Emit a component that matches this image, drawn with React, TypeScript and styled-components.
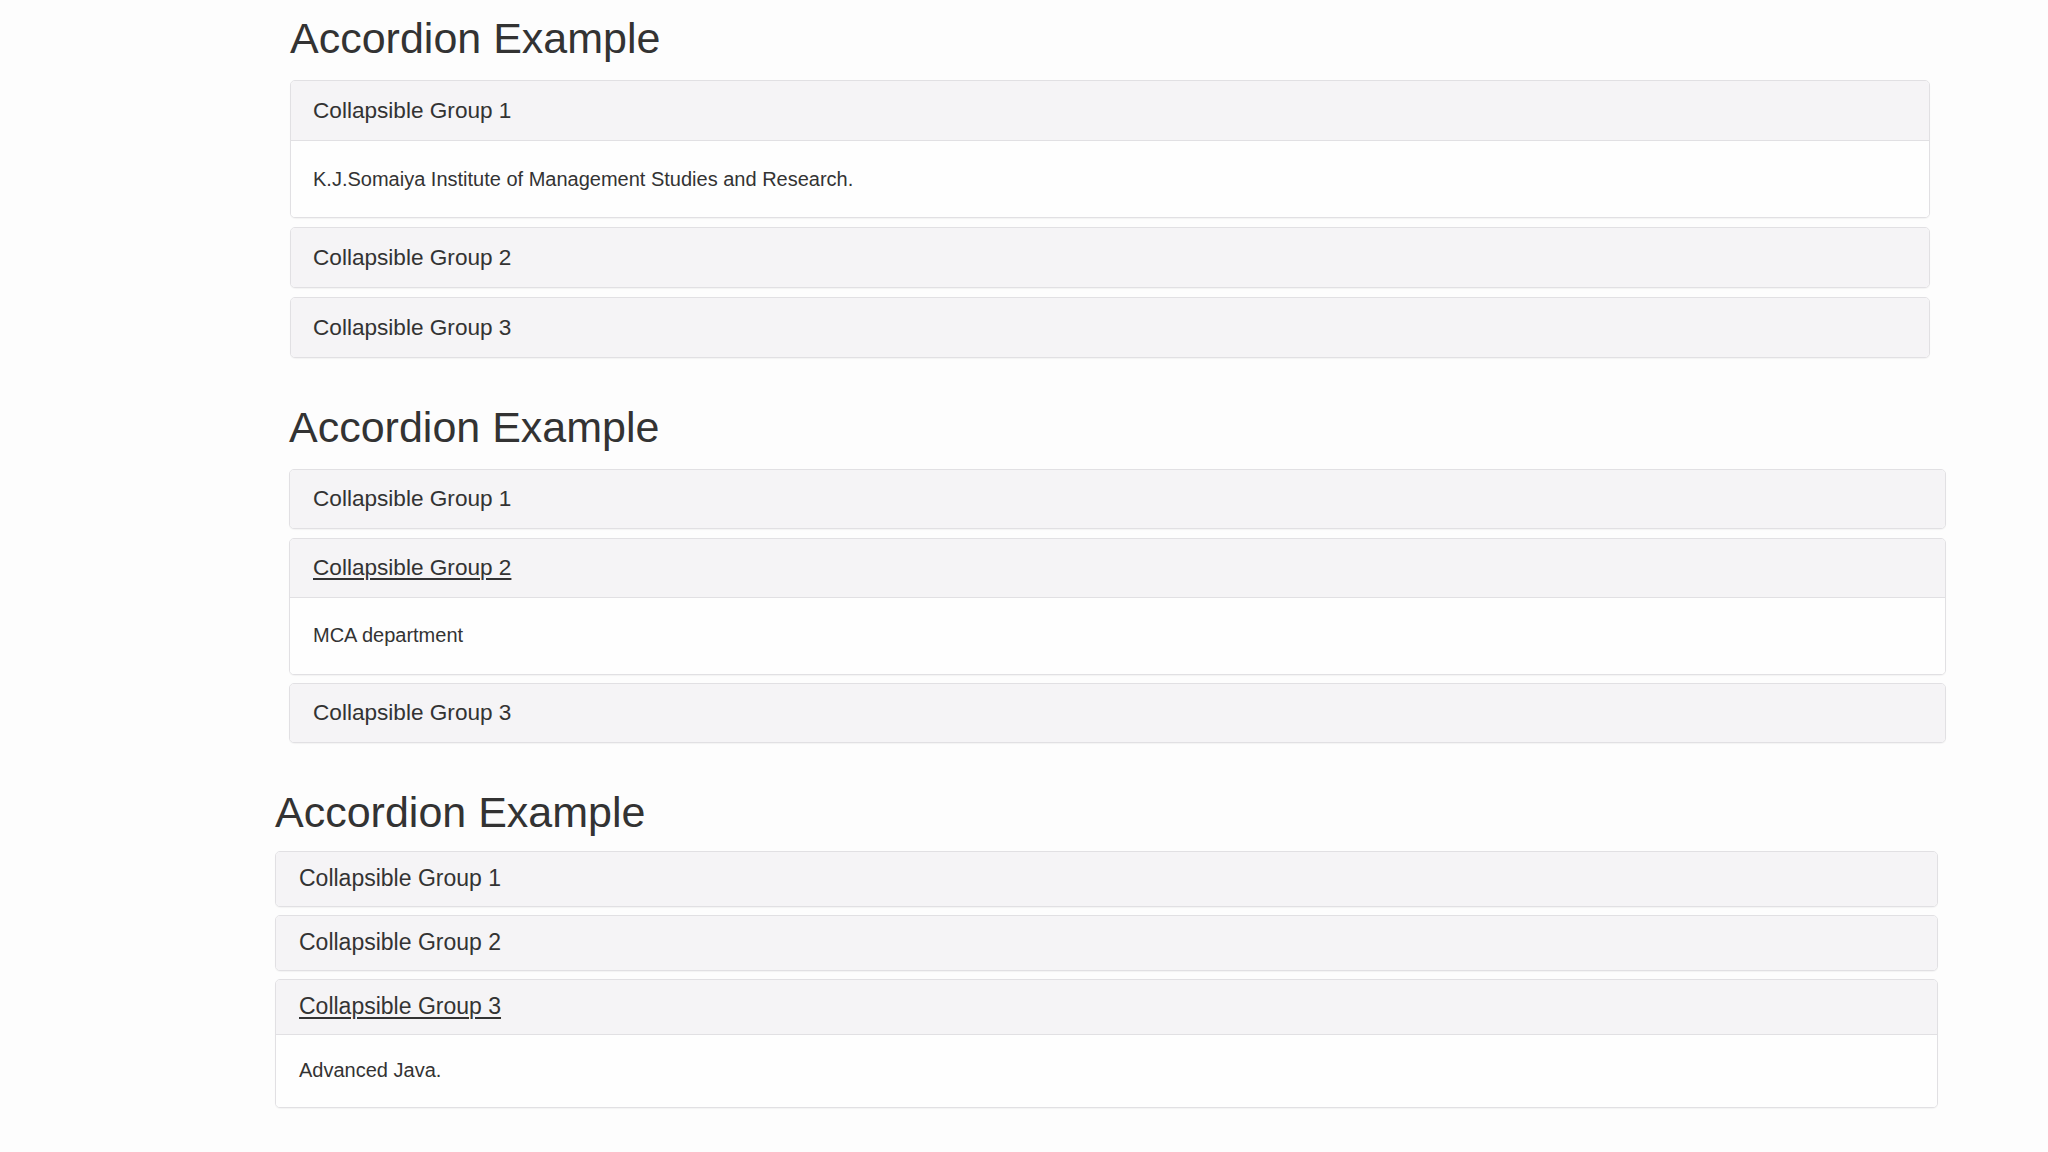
import React from "react";
import styled, { createGlobalStyle } from "styled-components";

const GlobalStyle = createGlobalStyle`
  html, body {
    margin: 0;
    padding: 0;
    background: #fdfdfd;
  }
  body {
    font-family: "Liberation Sans", Arial, Helvetica, sans-serif;
    color: #333;
  }
`;

const Page = styled.main`
  display: flex;
  flex-direction: column;
  align-items: flex-start;
  min-height: 1152px;
  padding-top: 14px;
  box-sizing: border-box;
  background: #fdfdfd;
`;

const Section = styled.section<{ $left: number; $width: number; $top: number }>`
  display: flex;
  flex-direction: column;
  margin-left: ${(p) => p.$left}px;
  margin-top: ${(p) => p.$top}px;
  width: ${(p) => p.$width}px;
`;

const Title = styled.h2<{ $gap: number }>`
  margin: 0 0 ${(p) => p.$gap}px 0;
  font-family: "Liberation Sans", Arial, Helvetica, sans-serif;
  font-weight: 400;
  font-size: 43px;
  line-height: 48px;
  color: #333;
`;

const PanelGroup = styled.div<{ $gap: number }>`
  display: flex;
  flex-direction: column;
  gap: ${(p) => p.$gap}px;
`;

const Panel = styled.div`
  display: flex;
  flex-direction: column;
  border: 1px solid #e1e0e3;
  border-radius: 5px;
  background: #fefefe;
  box-shadow: 0 1px 1px rgba(0, 0, 0, 0.04);
  overflow: hidden;
`;

const Heading = styled.div<{ $height: number; $pad: number }>`
  display: flex;
  align-items: center;
  height: ${(p) => p.$height}px;
  padding: 0 ${(p) => p.$pad}px;
  box-sizing: border-box;
  background: #f5f4f6;
`;

const HeadingLink = styled.a<{ $size: number; $active: boolean }>`
  font-size: ${(p) => p.$size}px;
  line-height: 1.15;
  color: #333;
  text-decoration: ${(p) => (p.$active ? "underline" : "none")};
  text-decoration-thickness: 1.5px;
  text-underline-offset: 3px;
  cursor: pointer;
`;

const Body = styled.div<{ $height: number; $pad: number }>`
  display: flex;
  align-items: center;
  height: ${(p) => p.$height}px;
  padding: 0 ${(p) => p.$pad}px;
  box-sizing: border-box;
  border-top: 1px solid #e1e0e3;
  background: #fefefe;
  font-size: 20px;
  line-height: 1.15;
  color: #333;
`;

type AccordionData = {
  left: number;
  width: number;
  top: number;
  titleGap: number;
  groupGap: number;
  headHeight: number;
  bodyHeight: number;
  pad: number;
  headSize: number;
  open: number;
  text: string;
};

const accordions: AccordionData[] = [
  {
    left: 290,
    width: 1640,
    top: 0,
    titleGap: 18,
    groupGap: 9,
    headHeight: 59,
    bodyHeight: 77,
    pad: 22,
    headSize: 22.6,
    open: 0,
    text: "K.J.Somaiya Institute of Management Studies and Research.",
  },
  {
    left: 289,
    width: 1657,
    top: 45,
    titleGap: 18,
    groupGap: 8.5,
    headHeight: 58,
    bodyHeight: 77,
    pad: 23,
    headSize: 22.6,
    open: 1,
    text: "MCA department",
  },
  {
    left: 275,
    width: 1663,
    top: 45,
    titleGap: 14.5,
    groupGap: 8,
    headHeight: 54,
    bodyHeight: 73,
    pad: 23,
    headSize: 23,
    open: 2,
    text: "Advanced Java.",
  },
];

const groups = ["Collapsible Group 1", "Collapsible Group 2", "Collapsible Group 3"];

export default function App() {
  return (
    <>
      <GlobalStyle />
      <Page>
        {accordions.map((a, i) => (
          <Section key={i} $left={a.left} $width={a.width} $top={a.top}>
            <Title $gap={a.titleGap}>Accordion Example</Title>
            <PanelGroup $gap={a.groupGap}>
              {groups.map((g, j) => (
                <Panel key={g}>
                  <Heading $height={a.headHeight} $pad={a.pad}>
                    <HeadingLink $size={a.headSize} $active={j === a.open && i > 0}>
                      {g}
                    </HeadingLink>
                  </Heading>
                  {j === a.open && (
                    <Body $height={a.bodyHeight} $pad={a.pad}>
                      {a.text}
                    </Body>
                  )}
                </Panel>
              ))}
            </PanelGroup>
          </Section>
        ))}
      </Page>
    </>
  );
}
